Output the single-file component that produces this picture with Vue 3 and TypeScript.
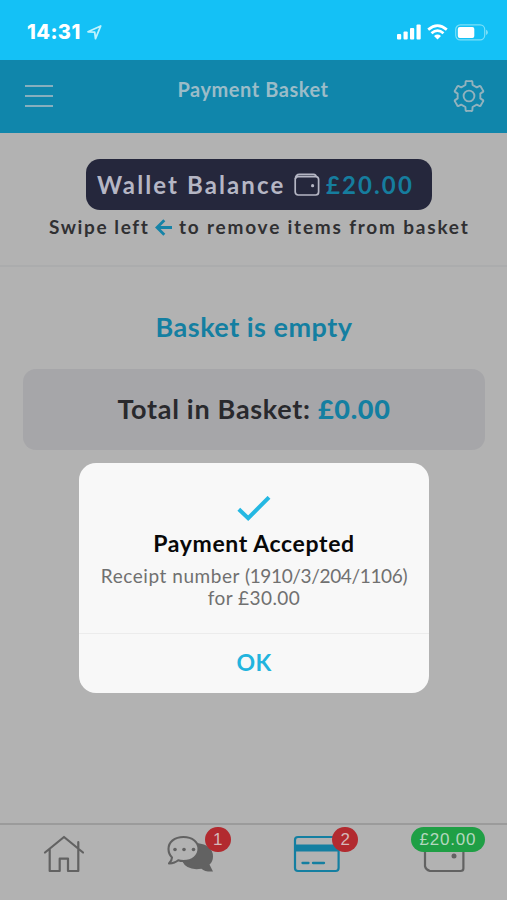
<script setup lang="ts">
import { ref } from 'vue'

const walletBalance = '£20.00'
const basketTotal = '£0.00'
const unreadMessages = 1
const basketItems = 2
const receipt = '1910/3/204/1106'
const amountPaid = '£30.00'
const dialogOpen = ref(true)

// Six-toothed cog outline centred in a 32px box
const polar = (radius: number, degrees: number): string => {
  const a = (degrees * Math.PI) / 180
  return `${(16 + radius * Math.cos(a)).toFixed(2)} ${(16 + radius * Math.sin(a)).toFixed(2)}`
}
const teeth = [-90, -30, 30, 90, 150, 210].map(
  (mid) =>
    `${polar(11.6, mid - 18)}L${polar(14.9, mid - 13)}Q${polar(15.4, mid - 10)} ${polar(15, mid - 8)}` +
    `L${polar(15, mid + 8)}Q${polar(15.4, mid + 10)} ${polar(14.9, mid + 13)}L${polar(11.6, mid + 18)}`,
)
const cogPath = `M${teeth.join('L')}Z`
</script>

<template>
  <div class="screen">
    <div class="status">
      <div class="clock">
        <span>14:31</span>
        <svg width="15" height="15" viewBox="0 0 15 15" fill="none" stroke="currentColor" stroke-width="1.8" stroke-linejoin="round">
          <path d="M1 6.8 13.7 1 8.5 13.6 7.7 7.2Z" />
        </svg>
      </div>
      <div class="signals">
        <svg width="24" height="16" viewBox="0 0 24 16" fill="currentColor">
          <rect x="0" y="10" width="4.2" height="5.5" rx="1" />
          <rect x="6.5" y="7.5" width="4.2" height="8" rx="1" />
          <rect x="13" y="4" width="4.2" height="11.5" rx="1" />
          <rect x="19.5" y="0.5" width="4.2" height="15" rx="1" />
        </svg>
        <svg width="21" height="16" viewBox="0 0 21 16" fill="none" stroke="currentColor" stroke-width="2.7">
          <path d="M1.2 5.6Q10.5-2.2 19.8 5.6" />
          <path d="M4.5 9.3Q10.5 4 16.5 9.3" />
          <path d="M7 12Q10.5 9.2 14 12L10.5 15.5Z" fill="currentColor" stroke="none" />
        </svg>
        <svg width="33" height="17" viewBox="0 0 33 17" fill="none">
          <rect x="0.7" y="0.9" width="29" height="15" rx="4.6" stroke="#7bdff8" stroke-width="1.2" />
          <rect x="2.8" y="3.1" width="16.5" height="10.8" rx="2" fill="#fff" />
          <path d="M31 5.8q1.900 .7 1.900 2.600t-1.900 2.600z" fill="#7bdff8" />
        </svg>
      </div>
    </div>

    <header class="header">
      <button class="menu" aria-label="Menu"><i /><i /><i /></button>
      <h1>Payment Basket</h1>
      <button class="settings" aria-label="Settings">
        <svg width="32" height="32" viewBox="0 0 32 32" fill="none" stroke="currentColor" stroke-width="1.9" stroke-linejoin="round">
          <path :d="cogPath" />
          <circle cx="16" cy="16" r="5.4" />
        </svg>
      </button>
    </header>

    <section class="wallet">
      <div class="balance">
        <span class="label">Wallet Balance</span>
        <svg width="26" height="24" viewBox="0 0 26 24" fill="none" stroke="currentColor" stroke-width="1.7">
          <rect x="1.2" y="3.6" width="23.4" height="18.4" rx="3" />
          <path d="M1.4 6Q1.6 1.3 5.5 1.3H19.5Q22 1.5 22.3 4" />
          <circle cx="18.6" cy="12.7" r="1.6" fill="currentColor" stroke="none" />
        </svg>
        <span class="money">{{ walletBalance }}</span>
      </div>
      <p class="hint">
        <span class="hint-start">Swipe left</span>
        <svg width="18" height="17" viewBox="0 0 18 17" fill="none" stroke="currentColor" stroke-width="2.8">
          <path d="M17 8.5H2.5M9.3 1.2 2 8.5l7.3 7.3" />
        </svg>
        <span class="hint-end">to remove items from basket</span>
      </p>
    </section>

    <main class="basket">
      <h2>Basket is empty</h2>
      <div class="total"><span>Total in Basket: <b>{{ basketTotal }}</b></span></div>
    </main>

    <nav class="tabs">
      <div class="tab home">
        <svg width="42" height="38" viewBox="0 0 42 38" fill="none" stroke="currentColor" stroke-width="2.2" stroke-linejoin="round" stroke-linecap="round">
          <path d="M2 17.5 21 2l19 15.5M6.7 14.5V36H16.7V23.7H25V36H35.3V14.5M35.3 13V7.2" />
        </svg>
      </div>
      <div class="tab chat">
        <svg width="48" height="38" viewBox="0 0 48 38">
          <path d="M30 8Q46 10 46 21.5 46 26.5 42.5 29.5L46 36.5Q38 37 34.5 33.7 20 36 15 26Z" fill="#626262" />
          <path d="M16.5 2C25.5 2 31.5 7.2 31.5 14S25.5 26 16.5 26Q13.5 26 11.2 25.2 8 28 2 28.5 5 25 5 22.4 1.5 19 1.5 14C1.5 7 7.5 2 16.5 2Z" fill="#b2b2b2" stroke="#626262" stroke-width="2.1" stroke-linejoin="round" />
          <g fill="#626262"><circle cx="8" cy="14.5" r="1.8" /><circle cx="17" cy="14.5" r="1.8" /><circle cx="26.5" cy="14.5" r="1.8" /></g>
        </svg>
        <span class="badge">{{ unreadMessages }}</span>
      </div>
      <div class="tab card">
        <svg width="48" height="38" viewBox="0 0 48 38" fill="none">
          <rect x="2" y="2" width="43.6" height="34" rx="3" stroke="#147fa1" stroke-width="2.2" />
          <path d="M2 9.5H46V16.500H2Z" fill="#147fa1" />
          <path d="M9.5 28h6M20 28h11" stroke="#147fa1" stroke-width="2.3" stroke-linecap="round" />
        </svg>
        <span class="badge">{{ basketItems }}</span>
      </div>
      <div class="tab purse">
        <svg width="42" height="38" viewBox="0 0 42 38" fill="none">
          <path d="M2 8V31Q2.5 34.5 7 36H37.5Q40.4 36 40.4 33.5V11Q40.4 8 38 8Z" stroke="#626262" stroke-width="2.2" />
          <circle cx="31" cy="21" r="2.5" fill="#626262" />
        </svg>
        <span class="badge green">{{ walletBalance }}</span>
      </div>
    </nav>

    <div v-if="dialogOpen" class="dialog" role="dialog">
      <svg class="tick" width="34" height="27" viewBox="0 0 34 27" fill="none" stroke="#25b8e2" stroke-width="4">
        <path d="M1.8 13.2 11.2 22.2 32 1.3" />
      </svg>
      <h3>Payment Accepted</h3>
      <p class="receipt">Receipt number <span>({{ receipt }})</span></p>
      <p class="amount">for {{ amountPaid }}</p>
      <button class="ok" @click="dialogOpen = false">OK</button>
    </div>
  </div>
</template>

<style>
body { margin: 0; background: #b2b2b2; }
</style>

<style scoped>
* { box-sizing: border-box; margin: 0; }
.screen { position: relative; display: flex; flex-direction: column; width: 507px; height: 900px; overflow: hidden; background: #b2b2b2; font-family: Lato, sans-serif; white-space: nowrap; }
button { padding: 0; border: 0; background: none; font-family: inherit; }
svg { display: block; flex: none; }
.status { display: flex; flex: none; justify-content: space-between; height: 60px; padding: 0 19px 0 27px; background: #14c1f6; color: #fff; }
.clock { display: flex; gap: 6px; height: 64px; align-items: center; font: 800 20px Inter, sans-serif; letter-spacing: .4px; }
.clock svg { color: #bff2fd; }
.signals { display: flex; align-items: center; height: 64px; gap: 7px; }
.signals svg:first-child { margin-right: -1px; }
.header { display: flex; flex: none; justify-content: space-between; height: 73px; padding: 0 22px 0 25px; background: #1086ab; color: #9bbcc8; }
.menu { display: flex; flex-direction: column; gap: 8px; width: 28px; padding-top: 25px; }
.menu i { height: 2px; background: #86afbe; }
.header h1 { padding-top: 17px; font-size: 20px; line-height: 24px; font-weight: 700; letter-spacing: .55px; }
.settings { color: #92b2bd; height: 72px; }
.wallet { display: flex; flex: none; flex-direction: column; align-items: center; height: 134px; padding-top: 26px; border-bottom: 2px solid #abacad; }
.balance { display: flex; align-items: center; width: 346px; height: 51px; margin-left: 11px; padding-left: 11px; border-radius: 14px; background: #25273c; color: #b5b6c4; font-size: 24px; font-weight: 700; }
.label { width: 197px; letter-spacing: 2.1px; }
.label, .money { padding-bottom: 1px; }
.money { margin-left: 6px; color: #167d9e; letter-spacing: 2.1px; }
.hint { display: flex; align-items: center; width: 421px; height: 32px; margin-left: 12px; color: #303032; font-size: 19px; font-weight: 700; letter-spacing: 1.8px; }
.hint-start { width: 106px; letter-spacing: 1.6px; }
.hint svg { color: #1683a7; margin-top: 2px; }
.hint-end { margin-left: 6px; }
.basket { flex: 1; padding: 42px 22px 0 23px; text-align: center; }
.basket h2 { color: #147fa1; font-size: 27px; font-weight: 700; line-height: 36px; letter-spacing: .5px; }
.total { height: 81px; margin-top: 24px; border-radius: 13px; background: #a6a6a9; color: #29292d; font-size: 27px; font-weight: 700; line-height: 80px; letter-spacing: .7px; }
.total b { color: #147fa1; }
.tabs { display: flex; flex: none; justify-content: space-between; height: 77px; padding: 10px 42px 0 43px; border-top: 2px solid #9b9b9b; color: #626262; }
.tab { position: relative; }
.chat { left: 1px; }
.card { left: -1px; }
.badge { position: absolute; left: 39px; top: -8px; height: 25px; min-width: 26px; padding: 0 6px; border-radius: 13px; background: #b22a2f; color: #d5b8b8; font: 17px/26px "Liberation Sans", sans-serif; text-align: center; }
.chat .badge { left: 38px; }
.green { left: -12px; width: 74px; padding: 0; background: #1f9f45; color: #b4d7bf; letter-spacing: .8px; }
.dialog { position: absolute; left: 79px; top: 463px; display: flex; flex-direction: column; align-items: center; width: 350px; height: 230px; padding-top: 33px; border-radius: 17px; background: #f8f8f8; }
.dialog h3 { margin-top: 4px; color: #080808; font-size: 23px; font-weight: 700; line-height: 32px; letter-spacing: .62px; }
.dialog p { color: #707070; font-size: 19px; line-height: 22px; letter-spacing: .45px; }
.dialog .receipt { margin-top: 6px; letter-spacing: .55px; }
.receipt span { letter-spacing: -.35px; }
.ok { width: 100%; height: 60px; margin-top: auto; padding-bottom: 3px; border-top: 1px solid #ececec; color: #22b4de; font-size: 23px; font-weight: 700; letter-spacing: .2px; }
</style>
